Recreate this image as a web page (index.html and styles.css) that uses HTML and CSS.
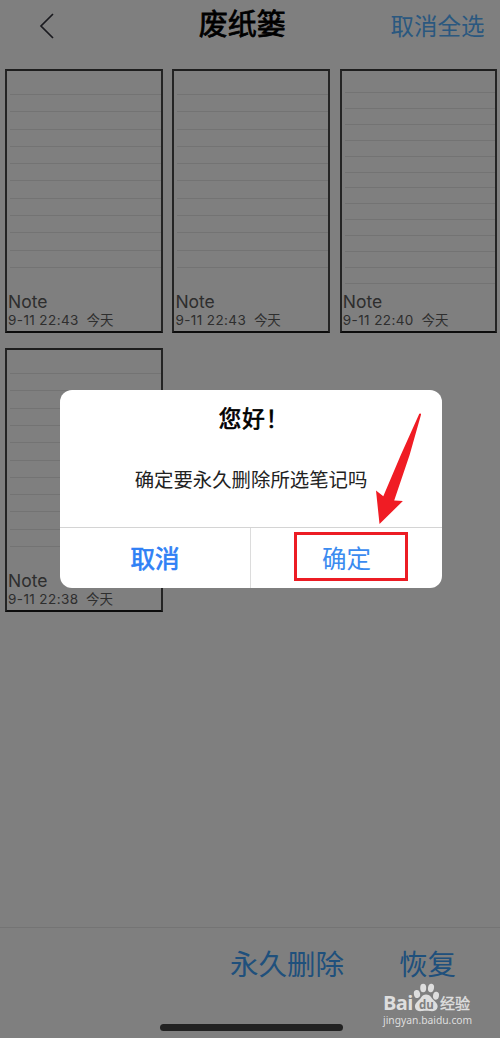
FILE: index.html
```html
<!DOCTYPE html>
<html lang="zh-CN">
<head>
  <meta charset="UTF-8">
  <meta name="viewport" content="width=device-width, initial-scale=1.0">
  <title>废纸篓</title>
  <link rel="stylesheet" href="styles.css">
</head>
<body>
  <header>
    <svg class="back" width="16" height="28" viewBox="0 0 16 28"><path d="M14 2 L2 14 L14 26" fill="none" stroke="#35353f" stroke-width="1.7"/></svg>
    <h1>废纸篓</h1>
    <a class="select-all">取消全选</a>
  </header>

  <main>
    <div class="note">
      <div class="lines"><i></i><i></i><i></i><i></i><i></i><i></i><i></i><i></i><i></i><i></i><i></i></div>
      <div class="name">Note</div>
      <div class="date">9-11 22:43 <span>今天</span></div>
    </div>
    <div class="note">
      <div class="lines"><i></i><i></i><i></i><i></i><i></i><i></i><i></i><i></i><i></i><i></i><i></i></div>
      <div class="name">Note</div>
      <div class="date">9-11 22:43 <span>今天</span></div>
    </div>
    <div class="note">
      <div class="lines dense"><i></i><i></i><i></i><i></i><i></i><i></i><i></i><i></i><i></i><i></i><i></i><i></i><i></i></div>
      <div class="name">Note</div>
      <div class="date">9-11 22:40 <span>今天</span></div>
    </div>
    <div class="note">
      <div class="lines"><i></i><i></i><i></i><i></i><i></i><i></i><i></i><i></i><i></i><i></i><i></i></div>
      <div class="name">Note</div>
      <div class="date">9-11 22:38 <span>今天</span></div>
    </div>
  </main>

  <footer>
    <div class="actions">
      <a>永久删除</a>
      <a>恢复</a>
    </div>
    <div class="home-bar"></div>
  </footer>

  <div class="overlay">
    <div class="dialog">
      <h2>您好！</h2>
      <p>确定要永久删除所选笔记吗</p>
      <div class="buttons">
        <button class="cancel">取消</button>
        <button>确定</button>
      </div>
    </div>
  </div>

  <div class="mark"></div>
  <svg class="arrow" width="50" height="114" viewBox="0 0 50 114"><path d="M44.3 1.8 Q46.2 0.6 46 2.8 L34.6 43 L19.2 88.4 L27.9 89 L4.5 112 L1 78.5 L8.3 84.2 L25.8 43 Z" fill="#f01c24"/></svg>

  <div class="watermark">
    <div class="logo">
      <span class="bai">Bai</span>
      <svg class="paw" width="27" height="29" viewBox="0 0 27 29">
        <g fill="#dedede">
          <ellipse cx="4" cy="11" rx="3.1" ry="4" transform="rotate(-12 4 11)"/>
          <ellipse cx="10.2" cy="5" rx="3" ry="4.2"/>
          <ellipse cx="18" cy="5" rx="3" ry="4.2" transform="rotate(10 18 5)"/>
          <ellipse cx="23" cy="12.7" rx="3" ry="4" transform="rotate(8 23 12.7)"/>
          <path d="M13 11.5 C17 11.5 18.2 14.5 20 16.5 C22.5 19 25 20.8 24.6 24 C24 27.7 20.5 28.5 17 28 C14.5 27.6 12 27.6 9.5 28 C6 28.5 2.5 27.9 2 24.2 C1.6 20.8 4.3 18.7 6.5 16.5 C8.5 14.5 9.3 11.5 13 11.5 Z"/>
        </g>
        <text x="13.3" y="25.5" text-anchor="middle" class="du">du</text>
      </svg>
      <span class="jy">经验</span>
    </div>
    <div class="url">jingyan.baidu.com</div>
  </div>
</body>
</html>
```
FILE: styles.css
```css
* {
  box-sizing: border-box;
}
body {
  font-family: Inter, "Noto Sans CJK SC", sans-serif;
  margin: 0;
  height: 1038px;
  background: #ffffff;
  display: flex;
  flex-direction: column;
  position: relative;
  overflow: hidden;
}
header {
  height: 69px;
  padding: 0 15.5px 0 39px;
  display: grid;
  grid-template-columns: 110px 1fr 110px;
}
.back {
  margin-top: 12px;
}
h1 {
  margin: 3px 0 0;
  font-size: 29px;
  line-height: 43px;
  font-weight: normal;
  -webkit-text-stroke: 0.8px #000;
  text-align: center;
  padding-right: 39px;
}
.select-all {
  font-size: 23.5px;
  line-height: 54px;
  color: #54b0ff;
  text-align: right;
  white-space: nowrap;
}
main {
  flex: 1;
  padding: 0 3px 0 5px;
  display: grid;
  grid-template-columns: 158px 158px 157px;
  justify-content: start;
  column-gap: 9.4px;
  align-content: start;
  row-gap: 15.6px;
}
.note {
  height: 263.5px;
  border: 2px solid #484848;
  border-top-color: #3c3c3c;
  border-bottom-color: #181818;
  color: #5c5c5c;
}
.lines {
  height: 197px;
  padding: 23px 0 0 3px;
  display: flex;
  flex-direction: column;
  justify-content: space-between;
}
.lines i {
  height: 1px;
  background: #e6e6e6;
}
.lines.dense {
  height: 213px;
  padding-top: 21px;
}
.name {
  margin-top: 22.5px;
  padding-left: 1px;
  font-size: 17.5px;
  line-height: 22px;
}
.dense + .name {
  margin-top: 6.5px;
}
.date {
  margin-top: -1px;
  padding-left: 1px;
  font-size: 13.5px;
  line-height: 17px;
  letter-spacing: 0.4px;
  white-space: nowrap;
}
.date span {
  margin-left: 3.5px;
  letter-spacing: 0;
}
footer {
  height: 111px;
  border-top: 1px solid #e8e8e8;
}
.actions {
  height: 68px;
  padding-right: 44px;
  display: flex;
  justify-content: flex-end;
  align-items: center;
  gap: 55px;
  font-size: 28.5px;
  color: #3ea0f8;
}
.home-bar {
  width: 183px;
  height: 7px;
  margin: 28px 0 0 160px;
  border-radius: 4px;
  background: #444;
}
.overlay {
  position: absolute;
  inset: 0;
  background: rgba(0, 0, 0, 0.5);
  padding: 390px 58px 0 60px;
}
.dialog {
  height: 198px;
  border-radius: 12px;
  background: #fff;
  text-align: center;
  overflow: hidden;
}
.dialog h2 {
  margin: 0;
  padding: 14px 0 0 6px;
  font-size: 22.5px;
  line-height: 29px;
  font-weight: normal;
  letter-spacing: 1px;
  -webkit-text-stroke: 0.7px #000;
}
.dialog p {
  margin: 32px 0 0;
  font-size: 19.4px;
  line-height: 31px;
  color: #222;
}
.buttons {
  margin-top: 31px;
  height: 61px;
  border-top: 1px solid #d4d4d4;
  display: grid;
  grid-template-columns: 1fr 1fr;
}
.buttons button {
  border: none;
  background: none;
  padding: 0 0 2px;
  font: 24.5px Inter, "Noto Sans CJK SC", sans-serif;
  color: #3b8bf0;
}
.buttons .cancel {
  -webkit-text-stroke: 0.7px #2f80f5;
  color: #2f80f5;
  border-right: 1px solid #dcdcdc;
}
.mark {
  position: absolute;
  left: 294px;
  top: 532px;
  width: 114px;
  height: 49px;
  border: 3px solid #ec1c24;
}
.arrow {
  position: absolute;
  left: 375px;
  top: 412px;
}
.watermark {
  position: absolute;
  left: 383px;
  top: 983px;
  color: #dedede;
}
.logo {
  display: flex;
  height: 29px;
}
.bai {
  width: 30px;
  padding-top: 11px;
  font: bold 20px/18px "Open Sans", sans-serif;
  letter-spacing: -0.6px;
}
.du {
  font: bold 11.5px "Open Sans", sans-serif;
  fill: #808080;
}
.jy {
  padding-top: 12px;
  font-size: 15px;
  line-height: 17px;
  -webkit-text-stroke: 0.4px #dedede;
}
.url {
  margin-top: 1px;
  font: 10.3px/14px "Noto Sans", sans-serif;
}
```
